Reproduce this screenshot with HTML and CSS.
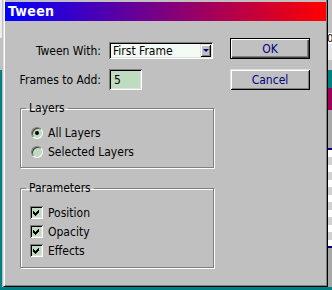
FILE: index.html
```html
<!DOCTYPE html>
<html lang="en">
<head>
  <meta charset="UTF-8">
  <meta name="viewport" content="width=device-width, initial-scale=1.0">
  <title>Tween</title>
  <link rel="stylesheet" href="styles.css">
</head>
<body>

  <div class="screen">
    <div class="edge-left"></div>

    <div class="dialog">
      <div class="titlebar">Tween</div>

      <div class="main">
        <div class="fields">
          <div class="grid">
            <label class="lbl">Tween With:</label>
            <div class="select">
              <span>First Frame</span>
              <span class="drop"><span class="arrow"></span></span>
            </div>

            <label class="lbl">Frames to Add:</label>
            <div class="field">5</div>
          </div>

          <fieldset class="group">
            <legend>Layers</legend>
            <div class="row"><span class="radio on"></span>All Layers</div>
            <div class="row"><span class="radio"></span>Selected Layers</div>
          </fieldset>

          <fieldset class="group params">
            <legend>Parameters</legend>
            <div class="row"><span class="check"><svg width="13" height="13" viewBox="0 0 13 13"><path d="M3 5 L5 7 L9 3 L9 6 L5 10 L3 8 Z" fill="#000"/></svg></span>Position</div>
            <div class="row"><span class="check"><svg width="13" height="13" viewBox="0 0 13 13"><path d="M3 5 L5 7 L9 3 L9 6 L5 10 L3 8 Z" fill="#000"/></svg></span>Opacity</div>
            <div class="row"><span class="check"><svg width="13" height="13" viewBox="0 0 13 13"><path d="M3 5 L5 7 L9 3 L9 6 L5 10 L3 8 Z" fill="#000"/></svg></span>Effects</div>
          </fieldset>
        </div>

        <div class="buttons">
          <button class="btn default" type="button">OK</button>
          <button class="btn" type="button">Cancel</button>
        </div>
      </div>
    </div>

    <div class="edge-right">
      <div class="strip s1"></div>
      <div class="strip s2">0</div>
      <div class="strip s3"></div>
      <div class="strip s4"></div>
      <div class="strip s5"></div>
      <div class="strip s6"></div>
      <div class="strip s7"></div>
      <div class="strip s8"></div>
      <div class="strip s9"></div>
    </div>
  </div>
  <div class="desk"></div>

</body>
</html>
```

FILE: styles.css
```css
body {
  margin: 0;
  width: 332px;
  height: 290px;
  overflow: hidden;
  background-color: #c0c0c0;
  font-family: "DejaVu Sans Condensed", "DejaVu Sans", sans-serif;
  font-stretch: condensed;
  font-size: 12px;
  color: #000;
}

.screen {
  display: flex;
  height: 287px;
}

.desk {
  height: 3px;
  background-color: #008080;
}

.edge-left {
  width: 3px;
  background: linear-gradient(to bottom, #ececec 0 38px, #c0c0c0 38px 70px, #008080 70px);
  box-shadow: inset -1px 0 #c0c0c0;
}

.edge-right {
  width: 4px;
  display: flex;
  flex-direction: column;
  overflow: hidden;
}
.strip { flex: none; }
.s1 { height: 33px; background: #c0c0c0; }
.s2 { height: 11px; background: #fff; font-size: 11px; line-height: 11px; margin-left: -1px; }
.s3 { height: 16px; background: #e4e4e4; }
.s4 { height: 10px; background: #c0c0c0; }
.s5 { height: 18px; background: #008080; }
.s6 { height: 22px; background: #a00058; }
.s7 { height: 38px; background: #a8a8a8; border-bottom: 2px solid #000080; }
.s8 {
  height: 96px;
  background: repeating-linear-gradient(to bottom, #fff 0 7px, #d0d0d0 7px 15px);
  border-bottom: 2px solid #000080;
}
.s9 { flex: 1; background: #a8a8a8; }

.dialog {
  width: 325px;
  height: 287px;
  box-sizing: border-box;
  background-color: #c0c0c0;
  border-left: 1px solid #dfdfdf;
  border-right: 1px solid #000;
  border-bottom: 1px solid #000;
  padding: 2px 1px 1px 1px;
  box-shadow: inset 1px 0 #fff, inset -1px -1px #808080;
}

.titlebar {
  height: 19px;
  padding-left: 3px;
  background: linear-gradient(to right, #0000ff, #ff0000);
  color: #fff;
  font-size: 14px;
  font-weight: bold;
  line-height: 19px;
  letter-spacing: 0.3px;
}

.main {
  display: flex;
}

.fields {
  width: 225px;
  padding-top: 21px;
}

.grid {
  display: grid;
  grid-template-columns: 96px auto;
  column-gap: 8px;
  row-gap: 10px;
  align-items: center;
  justify-items: start;
}

.lbl {
  justify-self: end;
}

.select, .field {
  box-sizing: border-box;
  display: flex;
  align-items: center;
  box-shadow: inset 1px 1px #808080, inset -1px -1px #fff, inset 2px 2px #000, inset -2px -2px #dfdfdf;
}

.select {
  width: 104px;
  height: 17px;
  padding: 0 2px 0 4px;
  background-color: #f4fbf4;
}

.drop {
  margin-left: auto;
  width: 11px;
  height: 13px;
  box-sizing: border-box;
  display: flex;
  align-items: center;
  justify-content: center;
  background-color: #c0c0c0;
  box-shadow: inset 1px 1px #dfdfdf, inset -1px -1px #000, inset 2px 2px #fff, inset -2px -2px #808080;
}

.arrow {
  width: 0;
  height: 0;
  border-left: 3px solid transparent;
  border-right: 3px solid transparent;
  border-top: 3px solid #000080;
}

.field {
  width: 33px;
  height: 21px;
  padding-left: 5px;
  background-color: #c0dcc0;
}

.group {
  width: 194px;
  box-sizing: border-box;
  margin: 11px 0 0 15px;
  padding: 8px 0 6px 5px;
  border: 1px solid #808080;
  box-shadow: 1px 1px 0 #fff, inset 1px 1px 0 #fff;
}

.params {
  margin-top: 13px;
  padding-bottom: 7px;
}

legend {
  padding: 0 3px;
  line-height: 14px;
}

.row {
  height: 19px;
  display: flex;
  align-items: center;
  gap: 5px;
  padding-left: 4px;
}

.radio {
  width: 12px;
  height: 12px;
  margin-left: 1px;
  box-sizing: border-box;
  border-radius: 50%;
  border: 1px solid;
  border-color: #808080 #fff #fff #808080;
  background-color: #c0dcc0;
  box-shadow: inset 1px 1px 0 #404040;
  display: flex;
  align-items: center;
  justify-content: center;
}

.radio.on::after {
  content: "";
  width: 4px;
  height: 4px;
  border-radius: 50%;
  background-color: #000;
}

.check {
  width: 13px;
  height: 13px;
  background-color: #c0dcc0;
  box-shadow: inset 1px 1px #808080, inset -1px -1px #fff, inset 2px 2px #000, inset -2px -2px #dfdfdf;
}

.check svg {
  display: block;
  shape-rendering: crispEdges;
}

.buttons {
  padding-top: 17px;
  display: flex;
  flex-direction: column;
  gap: 10px;
}

.btn {
  width: 80px;
  height: 21px;
  box-sizing: border-box;
  padding: 0;
  border: none;
  background-color: #c0c0c0;
  font: inherit;
  color: #000080;
  box-shadow: inset 1px 1px #dfdfdf, inset -1px -1px #000, inset 2px 2px #fff, inset -2px -2px #808080;
}

.btn.default {
  border: 1px solid #000;
  box-shadow: inset 1px 1px #fff, inset -1px -1px #404040, inset -2px -2px #808080;
}
```
